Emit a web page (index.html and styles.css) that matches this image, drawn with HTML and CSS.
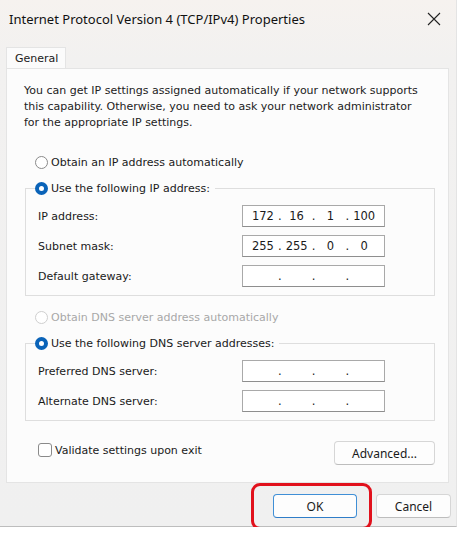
FILE: index.html
```html
<!DOCTYPE html>
<html lang="en">
<head>
  <meta charset="UTF-8">
  <title>Internet Protocol Version 4 (TCP/IPv4) Properties</title>
  <link rel="stylesheet" href="styles.css">
</head>
<body>
  <div class="dialog">
    <!-- Title bar -->
    <div class="titlebar">
      <span class="title">Internet Protocol Version 4 (TCP/IPv4) Properties</span>
      <svg class="close" width="14" height="14" viewBox="0 0 14 14">
        <path d="M1 1 L13 13 M13 1 L1 13" stroke="#222" stroke-width="1.1" fill="none"/>
      </svg>
    </div>

    <!-- Tabs -->
    <div class="tabs">
      <div class="tab">General</div>
    </div>

    <!-- Tab page -->
    <div class="panel">
      <p class="intro">You can get IP settings assigned automatically if your network supports<br>this capability. Otherwise, you need to ask your network administrator<br>for the appropriate IP settings.</p>

      <div class="option">
        <span class="radio"></span>
        <span>Obtain an IP address automatically</span>
      </div>

      <fieldset class="group">
        <legend class="option">
          <span class="radio checked"></span>
          <span>Use the following IP address:</span>
        </legend>
        <div class="field">
          <span>IP address:</span>
          <div class="ipbox"><span class="seg">172</span><span class="dot">.</span><span class="seg">16</span><span class="dot">.</span><span class="seg">1</span><span class="dot">.</span><span class="seg">100</span></div>
        </div>
        <div class="field">
          <span>Subnet mask:</span>
          <div class="ipbox"><span class="seg">255</span><span class="dot">.</span><span class="seg">255</span><span class="dot">.</span><span class="seg">0</span><span class="dot">.</span><span class="seg">0</span></div>
        </div>
        <div class="field">
          <span>Default gateway:</span>
          <div class="ipbox"><span class="seg"></span><span class="dot">.</span><span class="seg"></span><span class="dot">.</span><span class="seg"></span><span class="dot">.</span><span class="seg"></span></div>
        </div>
      </fieldset>

      <div class="option disabled">
        <span class="radio"></span>
        <span>Obtain DNS server address automatically</span>
      </div>

      <fieldset class="group">
        <legend class="option">
          <span class="radio checked"></span>
          <span>Use the following DNS server addresses:</span>
        </legend>
        <div class="field">
          <span>Preferred DNS server:</span>
          <div class="ipbox"><span class="seg"></span><span class="dot">.</span><span class="seg"></span><span class="dot">.</span><span class="seg"></span><span class="dot">.</span><span class="seg"></span></div>
        </div>
        <div class="field">
          <span>Alternate DNS server:</span>
          <div class="ipbox"><span class="seg"></span><span class="dot">.</span><span class="seg"></span><span class="dot">.</span><span class="seg"></span><span class="dot">.</span><span class="seg"></span></div>
        </div>
      </fieldset>

      <div class="bottom-row">
        <div class="option check">
          <span class="checkbox"></span>
          <span>Validate settings upon exit</span>
        </div>
        <button class="btn advanced">Advanced...</button>
      </div>
    </div>

    <!-- Dialog buttons -->
    <div class="footer">
      <div class="ok-wrap">
        <button class="btn ok">OK</button>
        <span class="highlight"></span>
      </div>
      <button class="btn cancel">Cancel</button>
    </div>
  </div>
</body>
</html>
```

FILE: styles.css
```css
body {
  margin: 0;
  background: #fff;
  font-family: "DejaVu Sans", sans-serif;
  font-size: 11px;
  color: #1a1a1a;
}

.dialog {
  width: 457px;
  height: 527px;
  background: linear-gradient(#f6f2ef, #f2f1f0 60px, #f0f0f0);
  border-right: 1px solid #e4e4e4;
  border-bottom: 1px solid #bdbdbd;
  box-sizing: border-box;
  display: flex;
  flex-direction: column;
}

.titlebar {
  height: 38px;
  display: flex;
  align-items: center;
  justify-content: space-between;
  padding: 0 15px 0 9px;
}

.title {
  font-family: "Noto Sans", sans-serif;
  font-size: 13px;
  color: #111;
}

.tabs {
  display: flex;
  padding: 9px 0 0 6px;
}

.tab {
  width: 60px;
  height: 21px;
  line-height: 21px;
  box-sizing: border-box;
  padding-left: 8px;
  background: #fbfbfb;
  border: 1px solid #e4e4e4;
  border-bottom: none;
  font-size: 11px;
}

.panel {
  margin: 0 7px 0 6px;
  height: 415px;
  box-sizing: border-box;
  background: #fcfcfc;
  border: 1px solid #e4e4e4;
  padding: 14px 12px 0 17px;
}

.intro {
  margin: 0;
  line-height: 16px;
  color: #222;
  white-space: nowrap;
}

.option {
  display: flex;
  align-items: center;
  gap: 3px;
  height: 16px;
}

.panel > .option {
  margin: 23px 0 0 11px;
}

.panel > .option.disabled {
  margin-top: 13px;
  color: #a8a8a8;
}

.radio {
  width: 13px;
  height: 13px;
  box-sizing: border-box;
  border-radius: 50%;
  border: 1px solid #8a8a8a;
  background: #fff;
}

.radio.checked {
  border: 4px solid #0a63b8;
}

.disabled .radio {
  border-color: #cfcfcf;
}

.group {
  margin: 10px 1px 0 1px;
  padding: 1px 0 8px 12px;
  border: 1px solid #dedede;
}

.group legend {
  padding: 0 5px 0 0;
  margin-left: -3px;
  background: #fcfcfc;
}

.field {
  display: flex;
  justify-content: space-between;
  align-items: center;
  height: 22px;
  margin-top: 8px;
  padding-right: 49px;
}

.ipbox {
  width: 143px;
  height: 22px;
  box-sizing: border-box;
  border: 1px solid #a9a9a9;
  border-bottom-color: #8e8e8e;
  background: #fff;
  display: flex;
  align-items: center;
  padding: 0 6px;
  font-size: 11.5px;
}

.seg {
  flex: 1;
  text-align: center;
}

.dot {
  width: 6px;
  text-align: center;
}

.bottom-row {
  display: flex;
  justify-content: space-between;
  align-items: flex-start;
  margin-top: 16px;
  padding-right: 1px;
}

.check {
  margin: 5px 0 0 14px;
}

.checkbox {
  width: 14px;
  height: 14px;
  box-sizing: border-box;
  border: 1px solid #8a8a8a;
  border-radius: 3px;
  background: #fff;
}

.btn {
  font-family: "Noto Sans", sans-serif;
  font-size: 12px;
  color: #1a1a1a;
  background: #fdfdfd;
  border: 1px solid #d6d6d6;
  border-bottom-color: #bdbdbd;
  border-radius: 4px;
  height: 24px;
  padding: 0;
}

.advanced {
  width: 101px;
  margin-top: 4px;
}

.footer {
  display: flex;
  justify-content: flex-end;
  align-items: center;
  gap: 19px;
  padding: 11px 5px 0 0;
}

.ok-wrap {
  position: relative;
  display: flex;
}

.ok {
  width: 84px;
  border-color: #3f8fd6;
  border-bottom-color: #2f7dc8;
}

.cancel {
  width: 75px;
}

.highlight {
  position: absolute;
  left: -22px;
  top: -11px;
  width: 121px;
  height: 47px;
  box-sizing: border-box;
  border: 3px solid #e1111c;
  border-radius: 9px;
}
```
